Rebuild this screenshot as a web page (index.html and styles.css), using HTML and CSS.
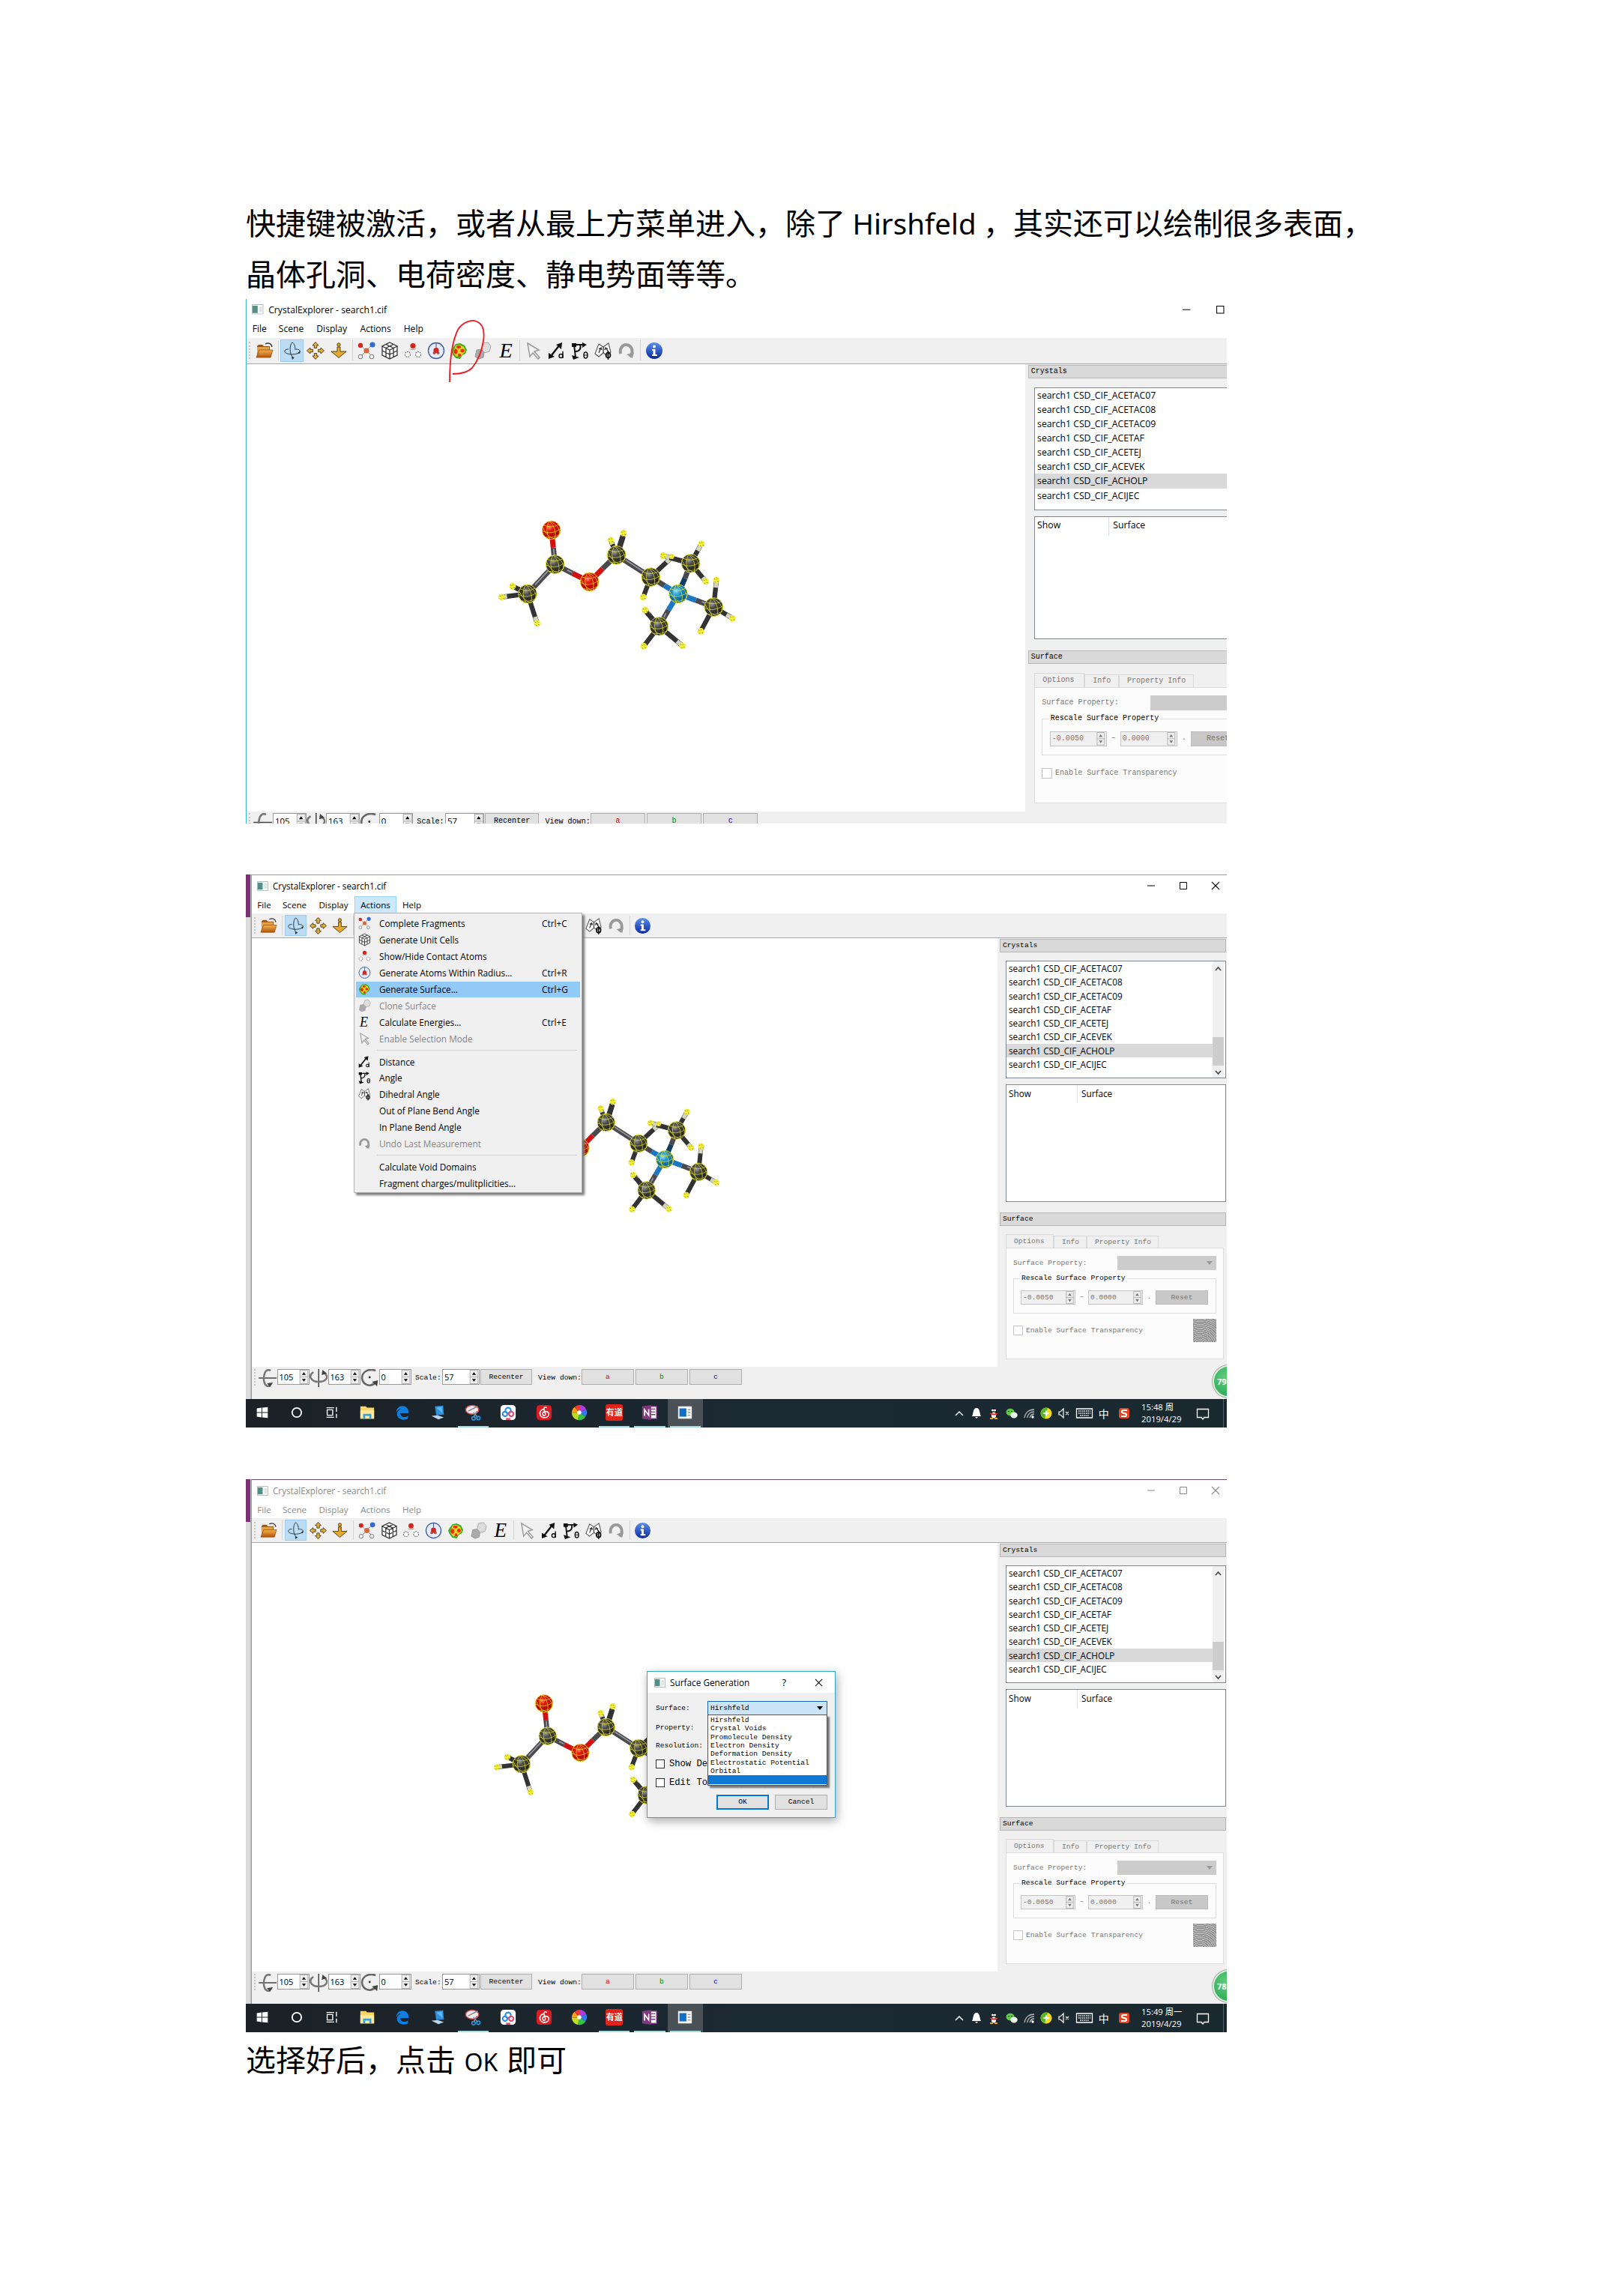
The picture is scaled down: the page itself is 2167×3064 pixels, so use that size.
FILE: index.html
```html
<!DOCTYPE html>
<html lang="zh-CN">
<head>
<meta charset="utf-8">
<title>CrystalExplorer</title>
<link rel="stylesheet" href="styles.css">
</head>
<body>
<svg class="defs" width="0" height="0">
<defs>
<radialGradient id="gC" cx=".4" cy=".35" r=".7"><stop offset="0" stop-color="#999"/><stop offset=".3" stop-color="#4a4a4a"/><stop offset="1" stop-color="#14140e"/></radialGradient>
<radialGradient id="gO" cx=".4" cy=".35" r=".7"><stop offset="0" stop-color="#ff8070"/><stop offset=".3" stop-color="#e01404"/><stop offset="1" stop-color="#900"/></radialGradient>
<radialGradient id="gN" cx=".4" cy=".35" r=".7"><stop offset="0" stop-color="#8fe0ff"/><stop offset=".35" stop-color="#1f8fc8"/><stop offset="1" stop-color="#064a78"/></radialGradient>
<linearGradient id="gF" x2="0" y2="1"><stop offset="0" stop-color="#f6b04a"/><stop offset="1" stop-color="#b3560c"/></linearGradient>
<linearGradient id="gI" x2="0" y2="1"><stop offset="0" stop-color="#5a8ff0"/><stop offset="1" stop-color="#0a2a9c"/></linearGradient>
<radialGradient id="gS"><stop offset="0" stop-color="#f01808"/><stop offset=".7" stop-color="#f03810"/><stop offset="1" stop-color="#f0a020"/></radialGradient>
<symbol id="mesh" viewBox="-40 -40 80 80" overflow="visible"><g fill="none" stroke="#f4f01c" stroke-width="2"><circle r="37" stroke-width="2.600"/><path d="M-37 2Q-5 22 37-4M-31-20Q0-6 30-22M-24 28Q8 34 32 18M-8-37Q-28 0-6 37M-8-37Q24-6 14 35M-8-37Q40-16 32 18M-35-12Q-16 30 14 35"/></g></symbol>
<symbol id="h" viewBox="-16 -16 32 32"><circle r="13" fill="#e9e43a"/><path d="M-13 0Q0 6 13-1M-5-12Q-3 0-6 12M5-12Q8 0 4 12" stroke="#ff3" stroke-width="3" fill="none"/><path d="M-8-5l4 2M4 4l5 3M2-7l3 3M-6 7l3 2" stroke="#86843c" stroke-width="3"/></symbol>
<symbol id="molecule" viewBox="0 0 1110 660">
<g stroke-width="21" stroke="#4a4a4e">
<path d="M302 252L295 185M302 252L192 370M302 252L372 288M548 215L492 270M548 215L685 303M845 248L822 308M937 423L866 396M718 500L756 435M685 303L740 337"/>
<path stroke="#d31010" d="M295 185L287 115M372 288L440 322M440 322L492 270"/>
<path stroke="#1d78c4" d="M740 337L795 370M795 370L866 396M795 370L756 435"/><path stroke="#123d63" d="M795 370L822 308"/>
<g stroke="#333" stroke-width="19"><path d="M192 370L88 383M192 370L132 340M192 370L230 488M548 215L525 155M548 215L576 127M685 303L768 225M685 303L655 383M845 248L735 217M845 248L888 170M845 248L905 320M937 423L948 315M937 423L1012 468M937 423L885 520M718 500L662 435M718 500L657 580M718 500L812 578"/></g>
<g stroke="#d6d3bd" stroke-width="17"><path d="M88 383l22-3M132 340l20 10M230 488l-8-26M525 155l6 17M768 225l-20 19M735 217l32 9M888 170l-15 27M905 320l-12-15M948 315l-3 30M1012 468l-24-14M662 435l16 18M812 578l-22-18"/></g>
<g stroke="#9a9aa2" stroke-width="5"><path d="M276 276L222 334M584 234L660 284M746 448L738 464M890 402L918 412M296 190l3 28M350 275l20 10"/></g>
</g>
<g fill="url(#gC)"><circle cx="302" cy="252" r="37"/><circle cx="192" cy="370" r="37"/><circle cx="548" cy="215" r="37"/><circle cx="685" cy="303" r="37"/><circle cx="845" cy="248" r="37"/><circle cx="937" cy="423" r="37"/><circle cx="718" cy="500" r="37"/></g>
<circle cx="287" cy="115" r="37" fill="url(#gO)"/><circle cx="440" cy="322" r="37" fill="url(#gO)"/><circle cx="795" cy="370" r="37" fill="url(#gN)"/>
<path d="M560 192L576 140M176 360L140 344M696 478L668 444M822 242L760 226" stroke="#333" stroke-width="18"/>
<g><use href="#mesh" x="262" y="212" width="80" height="80"/><use href="#mesh" x="152" y="330" width="80" height="80"/><use href="#mesh" x="508" y="175" width="80" height="80"/><use href="#mesh" x="645" y="263" width="80" height="80"/><use href="#mesh" x="805" y="208" width="80" height="80"/><use href="#mesh" x="897" y="383" width="80" height="80"/><use href="#mesh" x="678" y="460" width="80" height="80"/><use href="#mesh" x="247" y="75" width="80" height="80"/><use href="#mesh" x="400" y="282" width="80" height="80"/><use href="#mesh" x="755" y="330" width="80" height="80"/></g>
<g><use href="#h" x="72" y="367" width="32" height="32"/><use href="#h" x="116" y="324" width="32" height="32"/><use href="#h" x="214" y="472" width="32" height="32"/><use href="#h" x="509" y="139" width="32" height="32"/><use href="#h" x="560" y="111" width="32" height="32"/><use href="#h" x="719" y="201" width="32" height="32"/><use href="#h" x="756" y="207" width="26" height="26"/><use href="#h" x="872" y="154" width="32" height="32"/><use href="#h" x="889" y="304" width="32" height="32"/><use href="#h" x="639" y="367" width="32" height="32"/><use href="#h" x="932" y="299" width="32" height="32"/><use href="#h" x="996" y="452" width="32" height="32"/><use href="#h" x="869" y="504" width="32" height="32"/><use href="#h" x="646" y="419" width="32" height="32"/><use href="#h" x="641" y="564" width="32" height="32"/><use href="#h" x="796" y="562" width="32" height="32"/></g>
</symbol>
<symbol id="app" viewBox="0 0 16 14"><path d="M.5.5h15v13H.5z" fill="#fff" stroke="#a9b4b4"/><path d="M1 2h7v10H1z" fill="#4f9088"/><path d="M10 3h4v8h-4z" fill="#dde6e6"/></symbol>
<symbol id="open" viewBox="0 0 24 24"><path d="M2 6l2-2h5l2 2h8v5H2z" fill="#9a5412"/><path d="M2 7h16v14H2z" fill="#e3a242"/><path d="M1 21L5 11h18l-3 10z" fill="url(#gF)" stroke="#8a4408" stroke-width=".7"/><path d="M13 3c4-2 8-1 9 4" fill="none" stroke="#333" stroke-width="1.3"/></symbol>
<symbol id="rot" viewBox="0 0 24 24"><g fill="none" stroke="#26343e" stroke-width="1"><path d="M12 1c-4 3-4 16 1 20M12 1c3 1 4 6 4 10M2 12c-2 5 15 7 20 2M2 12c1-2 3-2 5-2M17 10c4 0 6 2 5 4"/></g><path d="M11 20l4 1-3 3zM19 15l4-3-1 4z" fill="#26343e"/></symbol>
<symbol id="move" viewBox="0 0 24 24"><g fill="#e2b04a" stroke="#5a4210" stroke-width="1"><path d="M12 .5l4 4.500h-2.300V8.500h-3.400V5H8zM12 23.500l4-4.500h-2.300v-3.500h-3.400V19H8zM.5 12L5 8v2.300h3.500v3.400H5V16zM23.500 12L19 8v2.300h-3.500v3.400H19V16z"/></g></symbol>
<symbol id="zoomi" viewBox="0 0 24 24"><g fill="#e2a831" stroke="#5a4210" stroke-width="1"><path d="M10 7h4v6h8l-10 8.500L2 13h8z"/><circle cx="12" cy="4" r="2.200"/></g></symbol>
<symbol id="frag" viewBox="0 0 24 24"><path d="M4 5l8 7 7-8M12 12l-8 8M12 12l8 8" fill="none" stroke="#999" stroke-width="1"/><circle cx="4" cy="5" r="3.200" fill="#d3261c"/><circle cx="20" cy="4" r="3.600" fill="#3569d0"/><circle cx="12" cy="12" r="3.600" fill="#d6653c"/><g fill="#f4f4f4" stroke="#777"><circle cx="4" cy="20" r="2.800"/><circle cx="19" cy="20" r="2.800"/></g></symbol>
<symbol id="cube" viewBox="0 0 24 24"><path d="M12 1l10 5v12l-10 5-10-5V6z" fill="#fff"/><g fill="none" stroke="#333" stroke-width="1.300"><path d="M12 1l10 5v12l-10 5-10-5V6zM2 6l10 5 10-5M12 11v12M7 3.500l10 5V20M17 3.500L7 8.500V20M2 12l10 5 10-5"/></g></symbol>
<symbol id="contact" viewBox="0 0 24 24"><circle cx="12" cy="5.500" r="3.600" fill="#d3261c"/><path d="M8 9c-1 2 8 2 8 0" stroke="#999" fill="none"/><g fill="#fff" stroke="#777" stroke-width="1.200" stroke-dasharray="2 1"><circle cx="5" cy="17" r="3.500"/><circle cx="19" cy="17" r="3.500"/></g></symbol>
<symbol id="radius" viewBox="0 0 24 24"><circle cx="12" cy="12" r="10.500" fill="#e4ecfa" stroke="#3a5a9a" stroke-width="1.300"/><path d="M12 1v7" stroke="#3a5a9a"/><circle cx="9.500" cy="15" r="2" fill="#a55"/><circle cx="14.500" cy="15" r="2" fill="#966"/><circle cx="12" cy="11.500" r="3.600" fill="#d3261c"/></symbol>
<symbol id="surf" viewBox="0 0 24 24"><path d="M7 3l6-1 6 3 3 6-2 5-4 2-3 5-6-1-4-5-2-5 3-5z" fill="#3fae20"/><path d="M7 5l5-1 6 3 2 6-5 5-7 2-4-5z" fill="#d8dc20"/><g fill="url(#gS)"><ellipse cx="11" cy="7" rx="3.500" ry="2.300"/><ellipse cx="7" cy="13" rx="3" ry="4"/><ellipse cx="16" cy="12" rx="3" ry="2.800"/><circle cx="12" cy="18" r="2.400"/></g></symbol>
<symbol id="clone" viewBox="0 0 24 24"><path d="M12 2l7-1 4 5-2 7-7 2-4-4z" fill="#ddd" stroke="#aaa"/><path d="M4 11l6-1 4 4-1 7-6 2-5-3z" fill="#aaa" stroke="#999"/></symbol>
<symbol id="sel" viewBox="0 0 24 24"><path d="M4 2l15 9-6 2 7 8-2 2-7-8-4 5z" fill="#f2f2f2" stroke="#999" stroke-width="1.500"/></symbol>
<symbol id="dist" viewBox="0 0 24 24"><path d="M5 18L16 4" stroke="#111" stroke-width="2.400"/><path d="M11 4l8-3-1 9zM1 15l8 5-8 3z" fill="#111"/><path d="M20 13v9" stroke="#111" stroke-width="1.500"/><circle cx="17.500" cy="19" r="2.500" fill="none" stroke="#111" stroke-width="1.500"/></symbol>
<symbol id="angle" viewBox="0 0 24 24"><path d="M3 4h14M4 4l2 17M12 4c2 5-1 9-6 9" fill="none" stroke="#111" stroke-width="2"/><path d="M15 1l6 3-6 4zM1 18l10 3-8 3zM1 2h6v5H1z" fill="#111"/><ellipse cx="19.500" cy="18" rx="2.500" ry="4" fill="none" stroke="#111" stroke-width="1.500"/><path d="M17 18h5" stroke="#111"/></symbol>
<symbol id="dihed" viewBox="0 0 24 24"><path d="M6 3l6 4 7-5 3 12-5 4-5-3-6 5-5-4z" fill="#fff" stroke="#555" stroke-width="1.100"/><path d="M12 7v8M9 8l-3 7M15 8l4 6M6 10l3-2 1 3M14 11l1-3 3 2" fill="none" stroke="#333" stroke-width="1.300"/><ellipse cx="18.500" cy="18" rx="3" ry="3.500" fill="none" stroke="#111" stroke-width="1.800"/><path d="M18.500 12v12" stroke="#111" stroke-width="1.500"/></symbol>
<symbol id="undo" viewBox="0 0 24 24"><path d="M4 16C1 0 23 0 19 17l-3 3" fill="none" stroke="#999" stroke-width="4"/><path d="M12 17l8 5 2-8z" fill="#999"/></symbol>
<symbol id="info" viewBox="0 0 24 24"><circle cx="12" cy="12" r="11" fill="url(#gI)"/><circle cx="12" cy="6.500" r="2" fill="#fff"/><path d="M9 10h4.500v7H16v2H9v-2h1.500v-5H9z" fill="#fff"/></symbol>
<symbol id="rx" viewBox="0 0 24 24"><g fill="none" stroke="#444"><path d="M0 12h24" stroke-width="1.500"/><path d="M16 2C8-2 6 10 7 16c1 6 5 8 8 6" stroke="#777" stroke-width="2.500"/></g><path d="M11 19l8-1-4 6z" fill="#444"/></symbol>
<symbol id="ry" viewBox="0 0 24 24"><g fill="none" stroke="#444"><path d="M12 0v24" stroke-width="1.500"/><path d="M5 4C-3 9 2 17 12 17s15-7 7-12" stroke="#777" stroke-width="2.500"/></g><path d="M16 8l1-7 6 5z" fill="#444"/></symbol>
<symbol id="rz" viewBox="0 0 24 24"><path d="M20 2C8-2 1 6 2 13c1 8 11 12 18 5" fill="none" stroke="#666" stroke-width="2.500"/><path d="M15 17l8-2-1 8z" fill="#444"/><circle cx="12" cy="11" r="1.400" fill="#333"/></symbol>
<symbol id="win" viewBox="0 0 24 24"><path d="M4 6l7-1v6.500H4zM12 5l8-1v7.500h-8zM4 12.500h7V19l-7-1zM12 12.500h8V20l-8-1z" fill="#fff"/></symbol>
<symbol id="cort" viewBox="0 0 24 24"><circle cx="12" cy="12" r="6.700" fill="none" stroke="#fff" stroke-width="2"/></symbol>
<symbol id="task" viewBox="0 0 24 24"><path d="M4 5h11M4 19h11M5 8h8v8H5zM18.500 4v7M18.500 14v6" fill="none" stroke="#fff" stroke-width="1.500"/></symbol>
<symbol id="folder" viewBox="0 0 24 24"><path d="M2 3h8l2 2h10v16H2z" fill="#fbd664"/><path d="M2 9h20v12H2z" fill="#ffe9a0"/><path d="M6 21v-7h12v7h-3v-4H9v4z" fill="#39a2dc"/></symbol>
<symbol id="edge" viewBox="0 0 24 24"><path d="M3 12C3-1 22-1 21 13H9c0 6 7 7 11 4v4C10 26 1 18 5 11c3-5 6-5 9-4 0 0 2 1 2 3H9c1-7-4-2-6 2z" fill="#0f7ee0"/></symbol>
<symbol id="pc" viewBox="0 0 24 24"><path d="M8 3l12-1 1 13-11 1z" fill="#2d91e0"/><path d="M3 17l9-1 9 3-8 3z" fill="#bcd5e4"/><path d="M10 5l8-1 1 9z" fill="#62b8f2"/></symbol>
<symbol id="snip" viewBox="0 0 24 24"><ellipse cx="11" cy="8" rx="9.500" ry="6.500" fill="#f2eaea" stroke="#c44" stroke-width="1.500"/><path d="M5 10l14-7M13 12l6 7M18 10l-5 9" stroke="#889" stroke-width="1.700"/><circle cx="20" cy="20" r="2.500" fill="none" stroke="#299be0" stroke-width="1.700"/><circle cx="13" cy="20.500" r="2.500" fill="none" stroke="#299be0" stroke-width="1.700"/></symbol>
<symbol id="baidu" viewBox="0 0 24 24"><rect x="1" y="1" width="22" height="22" rx="5" fill="#fff"/><g fill="none" stroke-width="2.300"><circle cx="12" cy="9" r="4" stroke="#2a90e8"/><circle cx="7.500" cy="14" r="3.400" stroke="#2a90e8"/><circle cx="16.500" cy="14" r="3.400" stroke="#e8486a"/></g><path d="M9 20h6v3H9z" fill="#e8486a"/></symbol>
<symbol id="netease" viewBox="0 0 24 24"><rect x="1" y="1" width="22" height="22" rx="5" fill="#dd1b22"/><path d="M16 5c-3-2-5 0-4 3l2 6c0 4-5 3-4-1 1-3 8-4 9 1 0 7-13 8-13-1 0-3 2-5 5-6" fill="none" stroke="#fff" stroke-width="1.700"/></symbol>
<symbol id="pin" viewBox="0 0 24 24"><g><path d="M12 12L12 1A11 11 0 0 1 22 7z" fill="#b13cd6"/><path d="M12 12L22 7A11 11 0 0 1 21 18z" fill="#3a78f0"/><path d="M12 12L21 18A11 11 0 0 1 10 23z" fill="#36c148"/><path d="M12 12L10 23A11 11 0 0 1 1 13z" fill="#bfe020"/><path d="M12 12L1 13A11 11 0 0 1 5 4z" fill="#f8a010"/><path d="M12 12L5 4A11 11 0 0 1 12 1z" fill="#f03a30"/></g><circle cx="12" cy="12" r="3" fill="#fff"/></symbol>
<symbol id="onenote" viewBox="0 0 24 24"><path d="M12 3h10v18H12z" fill="#fff" stroke="#7a3480" stroke-width="1.500"/><path d="M14 7h6M14 11h6M14 15h6" stroke="#7a3480" stroke-width="1.500"/><path d="M1 3l13-2v22L1 21z" fill="#80397b"/><path d="M4.500 17V8l6 8V7" fill="none" stroke="#fff" stroke-width="1.800"/></symbol>
<symbol id="ce" viewBox="0 0 24 24"><path d="M2 3h20v18H2z" fill="#f4f4f4"/><path d="M4 6h10v12H4z" fill="#0f6fc6"/><path d="M16 8h4M16 12h4M16 16h4" stroke="#999" stroke-width="1.500"/></symbol>
<symbol id="up" viewBox="0 0 16 16"><path d="M3 11l5-5 5 5" fill="none" stroke="#fff" stroke-width="1.500"/></symbol>
<symbol id="bell" viewBox="0 0 16 16"><path d="M8 1c5 0 4 8 6 11H2c2-3 1-11 6-11zM6 13h4l-2 2z" fill="#fff"/></symbol>
<symbol id="qq" viewBox="0 0 16 16"><ellipse cx="8" cy="8" rx="4.500" ry="7" fill="#111"/><ellipse cx="8" cy="10.500" rx="3.200" ry="4" fill="#fff"/><path d="M3 7q5 3 10 0v2q-5 3-10 0z" fill="#e22"/><path d="M3 14h4v2H3zM9 14h4v2H9z" fill="#f8a010"/><circle cx="6.500" cy="4" r="1.500" fill="#fff"/><circle cx="9.500" cy="4" r="1.500" fill="#fff"/></symbol>
<symbol id="wechat" viewBox="0 0 16 16"><ellipse cx="6" cy="6.500" rx="5.500" ry="4.800" fill="#5fce3c"/><ellipse cx="11" cy="10.500" rx="4.700" ry="4" fill="#eef5ea"/><circle cx="4" cy="5.500" r=".8"/><circle cx="8" cy="5.500" r=".8"/></symbol>
<symbol id="wifi" viewBox="0 0 16 16"><g fill="none" stroke="#bbb" stroke-width="1.300"><path d="M2 14C3 7 8 3 15 3M5.500 14c1-5 5-8 9.500-8M9 14c1-3 3-5 6-5"/></g><circle cx="13" cy="13" r="1.700" fill="#fff"/></symbol>
<symbol id="safe" viewBox="0 0 16 16"><circle cx="8" cy="8" r="7.500" fill="#f4dc18"/><path d="M8 .5a7.500 7.500 0 0 0-2 14.700L10 1z" fill="#54b828"/><path d="M8 4.500v7M4.500 8h7" stroke="#fff" stroke-width="2.200"/></symbol>
<symbol id="vol" viewBox="0 0 16 16"><path d="M2 6h2l4-4v12l-4-4H2zM11 6l4 4M15 6l-4 4" fill="none" stroke="#fff" stroke-width="1.200"/></symbol>
<symbol id="kbd" viewBox="0 0 24 16"><path d="M1.500 2h21v12h-21z" fill="none" stroke="#fff" stroke-width="1.300"/><path d="M4 5h16M4 8h16M6 11h12" stroke="#fff" stroke-width="1.500" stroke-dasharray="1.500 1"/></symbol>
<symbol id="sogou" viewBox="0 0 16 16"><rect x="1" y="1" width="14" height="14" rx="3" fill="#e8431c"/><path d="M12 4H6Q4 6 6 7.500l4 1Q12 10 10 12H4" fill="none" stroke="#fff" stroke-width="2.200"/></symbol>
<symbol id="note" viewBox="0 0 18 18"><path d="M1.500 2.500h15v11H11L9 16l-2-2.500H1.500z" fill="none" stroke="#fff" stroke-width="1.300"/></symbol>
<symbol id="min" viewBox="0 0 12 12"><path d="M1 6h10" stroke="currentColor"/></symbol>
<symbol id="max" viewBox="0 0 12 12"><path d="M1.500 1.500h9v9h-9z" fill="none" stroke="currentColor"/></symbol>
<symbol id="cls" viewBox="0 0 12 12"><path d="M1 1l10 10M11 1L1 11" stroke="currentColor" stroke-width="1.100"/></symbol>
<symbol id="spin" viewBox="0 0 11 18"><path d="M.5.500h10v17H.5zM0 9h11" fill="#eee" stroke="#b4b4b4"/><path d="M5.500 3l2.500 3.500H3zM5.500 15l2.500-3.500H3z" fill="currentColor"/></symbol>
</defs>
</svg>

<main class="page">
<p class="para">快捷键被激活，或者从最上方菜单进入，除了<span class="latin">Hirshfeld</span>，其实还可以绘制很多表面，<br>晶体孔洞、电荷密度、静电势面等等。</p>

<section class="shot shot-one">
<div class="window">
<header class="title"><svg class="appicon"><use href="#app"/></svg><span>CrystalExplorer - search1.cif</span><div class="winbtns"><svg><use href="#min"/></svg><svg><use href="#max"/></svg><svg><use href="#cls"/></svg></div></header>
<nav class="menu"><span class="m1">File</span><span class="m2">Scene</span><span class="m3">Display</span><span class="m3">Actions</span><span class="m4">Help</span></nav>
<div class="toolbar"><i class="grip"></i><b><svg><use href="#open"/></svg></b><i class="sep"></i><b class="on"><svg><use href="#rot"/></svg></b><b><svg><use href="#move"/></svg></b><b><svg><use href="#zoomi"/></svg></b><i class="sep"></i><b><svg><use href="#frag"/></svg></b><b><svg><use href="#cube"/></svg></b><b><svg><use href="#contact"/></svg></b><b><svg><use href="#radius"/></svg></b><b><svg><use href="#surf"/></svg></b><b><svg><use href="#clone"/></svg></b><b class="e">E</b><i class="sep"></i><b><svg><use href="#sel"/></svg></b><b><svg><use href="#dist"/></svg></b><b><svg><use href="#angle"/></svg></b><b><svg><use href="#dihed"/></svg></b><b><svg><use href="#undo"/></svg></b><i class="sep"></i><b><svg><use href="#info"/></svg></b></div>
<div class="work">
<div class="canvas"><svg class="mol"><use href="#molecule"/></svg></div>
<aside class="panel">
<h2>Crystals</h2>
<div class="list"><ul><li>search1 CSD_CIF_ACETAC07</li><li>search1 CSD_CIF_ACETAC08</li><li>search1 CSD_CIF_ACETAC09</li><li>search1 CSD_CIF_ACETAF</li><li>search1 CSD_CIF_ACETEJ</li><li>search1 CSD_CIF_ACEVEK</li><li class="cur">search1 CSD_CIF_ACHOLP</li><li>search1 CSD_CIF_ACIJEC</li></ul></div>
<div class="table"><span class="c1">Show</span><span class="c2">Surface</span></div>
<h2 class="second">Surface</h2>
<div class="tabs"><span class="t1">Options</span><span class="t2">Info</span><span class="t3">Property Info</span></div>
<div class="opts">
<div class="prop"><span>Surface Property:</span><i class="combo"></i></div>
<fieldset><legend>Rescale Surface Property</legend><div class="range"><span class="spin">-0.0050<svg><use href="#spin"/></svg></span><em>–</em><span class="spin">0.0000<svg><use href="#spin"/></svg></span><em>.</em><span class="reset">Reset</span></div></fieldset>
<div class="trans"><i class="check"></i><span>Enable Surface Transparency</span></div>
</div>
</aside>
</div>
<footer class="bottom"><i class="grip"></i><svg><use href="#rx"/></svg><span class="num">105<svg><use href="#spin"/></svg></span><svg><use href="#ry"/></svg><span class="num">163<svg><use href="#spin"/></svg></span><svg><use href="#rz"/></svg><span class="num">0<svg><use href="#spin"/></svg></span><span class="lab scale">Scale:</span><span class="num wide">57<svg><use href="#spin"/></svg></span><span class="btn">Recenter</span><span class="lab view">View down:</span><span class="btn ax red">a</span><span class="btn ax green">b</span><span class="btn ax blue">c</span></footer>
</div>
<svg class="scribble" viewBox="0 0 60 90"><path d="M4 84C4 55 7 30 15 14C21 4 33 0 40 3C48 6 51 15 49 29C47 42 42 55 34 65C29 70 19 73 8 73" fill="none" stroke="#f01820" stroke-width="1.800"/></svg>
</section>

<section class="shot shot-full">
<div class="desktop">
<div class="edge"></div>
<div class="window">
<header class="title"><svg class="appicon"><use href="#app"/></svg><span>CrystalExplorer - search1.cif</span><div class="winbtns"><svg><use href="#min"/></svg><svg><use href="#max"/></svg><svg><use href="#cls"/></svg></div></header>
<nav class="menu"><span class="m1">File</span><span class="m2">Scene</span><span class="m3">Display</span><span class="m3 open">Actions</span><span class="m4">Help</span></nav>
<div class="toolbar"><i class="grip"></i><b><svg><use href="#open"/></svg></b><i class="sep"></i><b class="on"><svg><use href="#rot"/></svg></b><b><svg><use href="#move"/></svg></b><b><svg><use href="#zoomi"/></svg></b><i class="sep"></i><b><svg><use href="#frag"/></svg></b><b><svg><use href="#cube"/></svg></b><b><svg><use href="#contact"/></svg></b><b><svg><use href="#radius"/></svg></b><b><svg><use href="#surf"/></svg></b><b><svg><use href="#clone"/></svg></b><b></b><i class="sep"></i><b><svg><use href="#sel"/></svg></b><b><svg><use href="#dist"/></svg></b><b><svg><use href="#angle"/></svg></b><b><svg><use href="#dihed"/></svg></b><b><svg><use href="#undo"/></svg></b><i class="sep"></i><b><svg><use href="#info"/></svg></b></div>
<div class="work">
<div class="canvas"><svg class="mol"><use href="#molecule"/></svg></div>
<aside class="panel">
<h2>Crystals</h2>
<div class="list"><ul><li>search1 CSD_CIF_ACETAC07</li><li>search1 CSD_CIF_ACETAC08</li><li>search1 CSD_CIF_ACETAC09</li><li>search1 CSD_CIF_ACETAF</li><li>search1 CSD_CIF_ACETEJ</li><li>search1 CSD_CIF_ACEVEK</li><li class="cur">search1 CSD_CIF_ACHOLP</li><li>search1 CSD_CIF_ACIJEC</li></ul><svg class="scroll" viewBox="0 0 15 155"><path d="M0 0h15v155H0z" fill="#f0f0f0"/><path d="M0 101h15v38H0z" fill="#cdcdcd"/><path d="M4 12l3.500-4 3.500 4M4 146l3.500 4 3.500-4" fill="none" stroke="#444" stroke-width="1.600"/></svg></div>
<div class="table"><span class="c1">Show</span><span class="c2">Surface</span></div>
<h2 class="second">Surface</h2>
<div class="tabs"><span class="t1">Options</span><span class="t2">Info</span><span class="t3">Property Info</span></div>
<div class="opts">
<div class="prop"><span>Surface Property:</span><i class="combo"></i></div>
<fieldset><legend>Rescale Surface Property</legend><div class="range"><span class="spin">-0.0050<svg><use href="#spin"/></svg></span><em>–</em><span class="spin">0.0000<svg><use href="#spin"/></svg></span><em>.</em><span class="reset">Reset</span></div></fieldset>
<div class="trans"><i class="check"></i><span>Enable Surface Transparency</span><i class="swatch"></i></div>
</div>
</aside>
</div>
<footer class="bottom"><i class="grip"></i><svg><use href="#rx"/></svg><span class="num">105<svg><use href="#spin"/></svg></span><svg><use href="#ry"/></svg><span class="num">163<svg><use href="#spin"/></svg></span><svg><use href="#rz"/></svg><span class="num">0<svg><use href="#spin"/></svg></span><span class="lab scale">Scale:</span><span class="num wide">57<svg><use href="#spin"/></svg></span><span class="btn">Recenter</span><span class="lab view">View down:</span><span class="btn ax red">a</span><span class="btn ax green">b</span><span class="btn ax blue">c</span></footer>
</div>
</div>
<div class="ball">79</div>
<div class="taskbar"><b><svg><use href="#win"/></svg></b><b><svg><use href="#cort"/></svg></b><b><svg><use href="#task"/></svg></b><b><svg><use href="#folder"/></svg></b><b><svg><use href="#edge"/></svg></b><b><svg><use href="#pc"/></svg></b><b class="run"><svg><use href="#snip"/></svg></b><b><svg><use href="#baidu"/></svg></b><b><svg><use href="#netease"/></svg></b><b><svg><use href="#pin"/></svg></b><b class="run"><span class="youdao">有道</span></b><b class="run"><svg><use href="#onenote"/></svg></b><b class="run act"><svg><use href="#ce"/></svg></b>
<div class="tray"><svg><use href="#up"/></svg><svg><use href="#bell"/></svg><svg><use href="#qq"/></svg><svg><use href="#wechat"/></svg><svg><use href="#wifi"/></svg><svg><use href="#safe"/></svg><svg><use href="#vol"/></svg><svg class="kbd"><use href="#kbd"/></svg><span class="zh">中</span><svg><use href="#sogou"/></svg><div class="clock"><span>15:48 周</span><span>2019/4/29</span></div><svg class="note"><use href="#note"/></svg><i class="peek"></i></div></div>
<div class="dropdown">
<div class="item"><svg><use href="#frag"/></svg><span>Complete Fragments</span><kbd>Ctrl+C</kbd></div>
<div class="item"><svg><use href="#cube"/></svg><span>Generate Unit Cells</span></div>
<div class="item"><svg><use href="#contact"/></svg><span>Show/Hide Contact Atoms</span></div>
<div class="item"><svg><use href="#radius"/></svg><span>Generate Atoms Within Radius...</span><kbd>Ctrl+R</kbd></div>
<div class="item hot"><svg><use href="#surf"/></svg><span>Generate Surface...</span><kbd>Ctrl+G</kbd></div>
<div class="item off"><svg><use href="#clone"/></svg><span>Clone Surface</span></div>
<div class="item"><b class="e">E</b><span>Calculate Energies...</span><kbd>Ctrl+E</kbd></div>
<div class="item off"><svg><use href="#sel"/></svg><span>Enable Selection Mode</span></div>
<hr>
<div class="item"><svg><use href="#dist"/></svg><span>Distance</span></div>
<div class="item"><svg><use href="#angle"/></svg><span>Angle</span></div>
<div class="item"><svg><use href="#dihed"/></svg><span>Dihedral Angle</span></div>
<div class="item"><svg></svg><span>Out of Plane Bend Angle</span></div>
<div class="item"><svg></svg><span>In Plane Bend Angle</span></div>
<div class="item off"><svg><use href="#undo"/></svg><span>Undo Last Measurement</span></div>
<hr>
<div class="item"><svg></svg><span>Calculate Void Domains</span></div>
<div class="item"><svg></svg><span>Fragment charges/mulitplicities...</span></div>
</div>
</section>

<section class="shot shot-full inactive">
<div class="desktop">
<div class="edge"></div>
<div class="window">
<header class="title"><svg class="appicon"><use href="#app"/></svg><span>CrystalExplorer - search1.cif</span><div class="winbtns"><svg><use href="#min"/></svg><svg><use href="#max"/></svg><svg><use href="#cls"/></svg></div></header>
<nav class="menu"><span class="m1">File</span><span class="m2">Scene</span><span class="m3">Display</span><span class="m3">Actions</span><span class="m4">Help</span></nav>
<div class="toolbar"><i class="grip"></i><b><svg><use href="#open"/></svg></b><i class="sep"></i><b class="on"><svg><use href="#rot"/></svg></b><b><svg><use href="#move"/></svg></b><b><svg><use href="#zoomi"/></svg></b><i class="sep"></i><b><svg><use href="#frag"/></svg></b><b><svg><use href="#cube"/></svg></b><b><svg><use href="#contact"/></svg></b><b><svg><use href="#radius"/></svg></b><b><svg><use href="#surf"/></svg></b><b><svg><use href="#clone"/></svg></b><b class="e">E</b><i class="sep"></i><b><svg><use href="#sel"/></svg></b><b><svg><use href="#dist"/></svg></b><b><svg><use href="#angle"/></svg></b><b><svg><use href="#dihed"/></svg></b><b><svg><use href="#undo"/></svg></b><i class="sep"></i><b><svg><use href="#info"/></svg></b></div>
<div class="work">
<div class="canvas"><svg class="mol"><use href="#molecule"/></svg></div>
<aside class="panel">
<h2>Crystals</h2>
<div class="list"><ul><li>search1 CSD_CIF_ACETAC07</li><li>search1 CSD_CIF_ACETAC08</li><li>search1 CSD_CIF_ACETAC09</li><li>search1 CSD_CIF_ACETAF</li><li>search1 CSD_CIF_ACETEJ</li><li>search1 CSD_CIF_ACEVEK</li><li class="cur">search1 CSD_CIF_ACHOLP</li><li>search1 CSD_CIF_ACIJEC</li></ul><svg class="scroll" viewBox="0 0 15 155"><path d="M0 0h15v155H0z" fill="#f0f0f0"/><path d="M0 101h15v38H0z" fill="#cdcdcd"/><path d="M4 12l3.500-4 3.500 4M4 146l3.500 4 3.500-4" fill="none" stroke="#444" stroke-width="1.600"/></svg></div>
<div class="table"><span class="c1">Show</span><span class="c2">Surface</span></div>
<h2 class="second">Surface</h2>
<div class="tabs"><span class="t1">Options</span><span class="t2">Info</span><span class="t3">Property Info</span></div>
<div class="opts">
<div class="prop"><span>Surface Property:</span><i class="combo"></i></div>
<fieldset><legend>Rescale Surface Property</legend><div class="range"><span class="spin">-0.0050<svg><use href="#spin"/></svg></span><em>–</em><span class="spin">0.0000<svg><use href="#spin"/></svg></span><em>.</em><span class="reset">Reset</span></div></fieldset>
<div class="trans"><i class="check"></i><span>Enable Surface Transparency</span><i class="swatch"></i></div>
</div>
</aside>
</div>
<footer class="bottom"><i class="grip"></i><svg><use href="#rx"/></svg><span class="num">105<svg><use href="#spin"/></svg></span><svg><use href="#ry"/></svg><span class="num">163<svg><use href="#spin"/></svg></span><svg><use href="#rz"/></svg><span class="num">0<svg><use href="#spin"/></svg></span><span class="lab scale">Scale:</span><span class="num wide">57<svg><use href="#spin"/></svg></span><span class="btn">Recenter</span><span class="lab view">View down:</span><span class="btn ax red">a</span><span class="btn ax green">b</span><span class="btn ax blue">c</span></footer>
</div>
</div>
<div class="ball">78</div>
<div class="taskbar"><b><svg><use href="#win"/></svg></b><b><svg><use href="#cort"/></svg></b><b><svg><use href="#task"/></svg></b><b><svg><use href="#folder"/></svg></b><b><svg><use href="#edge"/></svg></b><b><svg><use href="#pc"/></svg></b><b class="run"><svg><use href="#snip"/></svg></b><b><svg><use href="#baidu"/></svg></b><b><svg><use href="#netease"/></svg></b><b><svg><use href="#pin"/></svg></b><b class="run"><span class="youdao">有道</span></b><b class="run"><svg><use href="#onenote"/></svg></b><b class="run act"><svg><use href="#ce"/></svg></b>
<div class="tray"><svg><use href="#up"/></svg><svg><use href="#bell"/></svg><svg><use href="#qq"/></svg><svg><use href="#wechat"/></svg><svg><use href="#wifi"/></svg><svg><use href="#safe"/></svg><svg><use href="#vol"/></svg><svg class="kbd"><use href="#kbd"/></svg><span class="zh">中</span><svg><use href="#sogou"/></svg><div class="clock"><span>15:49 周一</span><span>2019/4/29</span></div><svg class="note"><use href="#note"/></svg><i class="peek"></i></div></div>
<div class="dialog">
<header><svg class="appicon"><use href="#app"/></svg><span>Surface Generation</span><span class="help">?</span><svg class="x"><use href="#cls"/></svg></header>
<div class="form">
<div class="field f1"><label>Surface:</label><div class="select">Hirshfeld<svg viewBox="0 0 8 5"><path d="M0 0h8L4 5z"/></svg></div></div>
<div class="field f2">Property:</div>
<div class="field f2">Resolution:</div>
<div class="field big"><i></i>Show De</div>
<div class="field big"><i></i>Edit Tonto Input (Advanced)</div>
<div class="actions"><span class="ok">OK</span><span>Cancel</span></div>
</div>
<ul class="options"><li>Hirshfeld</li><li>Crystal Voids</li><li>Promolecule Density</li><li>Electron Density</li><li>Deformation Density</li><li>Electrostatic Potential</li><li>Orbital</li><li class="pick"></li></ul>
</div>
</section>
<p class="para last">选择好后，点击<span class="ok-word">OK</span>即可</p>
</main>
</body>
</html>
```
FILE: styles.css
```css
* { box-sizing: border-box; }
body { margin: 0; background: #fff; color: #000; font-family: "Open Sans", "Noto Sans CJK SC", sans-serif; }
i, em { font-style: normal; }
.defs { position: absolute; }
.page { padding: 262px 0 0 328px; }

.para { margin: 0; font: 400 40px/68px "Noto Sans CJK SC", sans-serif; white-space: nowrap; height: 140px; }
.latin { display: inline-block; width: 184px; text-align: center; font-family: "Noto Sans", sans-serif; font-size: 38.500px; line-height: 50px; }
.ok-word { display: inline-block; width: 68px; text-align: center; font-family: "Noto Sans", sans-serif; font-size: 32px; line-height: 50px; }
.last { margin-top: 1px; height: 68px; }

.shot { position: relative; width: 1309px; overflow: hidden; }
.shot-one { height: 700px; margin-top: -3px; }
.shot-one .window { zoom: 1.0436; width: 1303px; border-left: 1px solid #35b5d0; }
.shot-full { height: 738px; margin-top: 68px; }
.shot-full.inactive { margin-top: 69px; }
.desktop { display: flex; height: 700px; }
.edge { width: 7px; background: linear-gradient(#7a3274 57px, #dcdcdc 57px); border-right: 1px solid #bbb; flex: none; }
.shot-full .window { width: 1302px; border-left: 1px solid #4fb3cf; border-top: 1px solid #4fb3cf; }
.inactive .window { border-left-color: #999; border-top-color: #6d4a68; }
.window { background: #fff; display: flex; flex-direction: column; height: 700px; }

.title { height: 28px; flex: none; display: flex; align-items: center; padding-left: 7px; font-size: 11.700px; }
.shot-one .title { height: 27px; }
.appicon { width: 15px; height: 13px; margin-right: 6px; }
.winbtns { margin-left: auto; display: flex; gap: 31px; padding-right: 9px; }
.shot-one .winbtns { padding-right: 8px; }
.winbtns svg { width: 12px; height: 12px; }
.menu { height: 23px; flex: none; display: flex; font-size: 11.600px; line-height: 23px; text-align: center; }
.menu .m1 { width: 33px; } .menu .m2 { width: 48px; } .menu .m3 { width: 56px; } .menu .m4 { width: 41px; }
.menu .open { background: #cce8ff; border: 1px solid #99d1ff; line-height: 21px; }
.inactive .title, .inactive .menu { color: #8a8a8a; }

.toolbar { height: 33px; flex: none; background: #f0f0f0; border-bottom: 1px solid #a8a8a8; display: flex; align-items: center; }
.grip { width: 0; height: 22px; margin: 0 3px 0 3px; border-left: 2px dotted #c4c4c4; }
.toolbar b { width: 29.700px; height: 28px; display: flex; align-items: center; justify-content: center; font-weight: 400; }
.toolbar svg { width: 23px; height: 23px; }
.toolbar .on { background: #bcdcf4; border: 1px solid #9ccbee; }
.toolbar .sep { width: 1px; height: 26px; background: #d4d4d4; margin: 0 2.500px; }
.e { font: italic 27px "Liberation Serif", serif; }

.work { display: flex; height: 572px; flex: none; }
.canvas { position: relative; flex: 1; overflow: hidden; }
.mol { position: absolute; left: 298.500px; top: 177px; width: 352px; height: 211px; }
.shot-one .mol { left: 298px; width: 354.500px; height: 211px; top: 176px; }

.panel { width: 306px; background: #f0f0f0; padding: 1px 1px 0 3px; font: 9.630px "Liberation Mono", monospace; color: #777; }
.panel h2 { margin: 0; height: 18px; border: 1px solid #b8b8b8; background: #d9d9d9; color: #000; font: inherit; line-height: 16px; padding-left: 3px; }
.panel h2.second { margin-top: 14px; }
.list, .table { margin-left: 8px; width: 294px; height: 157px; background: #fff; border: 1px solid #828790; color: #000; font: 11.750px "Open Sans", sans-serif; display: flex; }
.list { margin-top: 11px; justify-content: space-between; }
.list ul { margin: 0; padding: 0; list-style: none; width: 275px; }
.list li { height: 18.300px; line-height: 18.300px; padding-left: 3px; }
.list .cur { background: #d9d9d9; }
.scroll { width: 15px; height: 155px; margin-right: 2px; }
.table { margin-top: 8px; line-height: 22px; }
.table .c1 { width: 95px; padding-left: 3px; height: 24px; border-right: 1px solid #ddd; }
.table .c2 { padding-left: 5px; }
.tabs { display: flex; margin: 11px 0 0 8px; height: 18px; align-items: flex-end; line-height: 16px; }
.tabs span { border: 1px solid #d9d9d9; border-bottom: 0; height: 16px; padding-left: 10px; }
.tabs .t1 { width: 64px; height: 18px; line-height: 18px; } .tabs .t2 { width: 44px; } .tabs .t3 { width: 96px; }
.opts { margin-left: 8px; width: 291px; height: 149px; border: 1px solid #dcdcdc; background: #fcfcfc; padding: 10px 9px 0 9px; }
.prop { display: flex; justify-content: space-between; height: 19px; line-height: 19px; }
.combo { width: 132px; background: #ccc; }
.combo::after { content: ""; display: block; margin: 7px 5px 0 auto; width: 0; border: 4px solid transparent; border-top: 5px solid #999; border-bottom: 0; }
.opts fieldset { margin: 4px 0 0; padding: 9px 9px 0; height: 54px; border: 1px solid #dcdcdc; }
.opts legend { padding: 0 2px; margin-left: -1px; color: #000; line-height: 14px; height: 14px; }
.range { display: flex; height: 19px; line-height: 18px; }
.range em { width: 17px; text-align: center; }
.spin { width: 73px; border: 1px solid #c4c4c4; background: #f0f0f0; display: flex; justify-content: space-between; padding-left: 2px; }
.spin svg { width: 13px; height: 17px; }
.reset { width: 70px; background: #c8c8c8; border: 1px solid #bcbcbc; text-align: center; }
.trans { display: flex; align-items: center; margin-top: 7px; height: 31px; }
.check { width: 13px; height: 13px; border: 1px solid #c4c4c4; background: #fff; margin-right: 4px; }
.swatch { margin-left: auto; width: 31px; height: 31px; background: repeating-radial-gradient(circle at 30% 120%, #888 0 1px, #b5b5b5 1px 2.500px); }

.bottom { height: 43px; flex: none; background: #f0f0f0; display: flex; align-items: flex-start; padding-top: 3px; font: 9.630px/20px "Liberation Mono", monospace; }
.shot-one .bottom { padding-top: 2px; }
.bottom .grip { margin: 0 4px 0 3px; }
.bottom > svg { width: 24.500px; height: 24px; flex: none; }
.num { width: 43.500px; height: 21px; border: 1px solid #999; background: #fff; display: flex; justify-content: space-between; align-items: center; padding-left: 2px; font: 11px "Open Sans", sans-serif; }
.num svg { width: 13px; height: 19px; }
.num.wide { width: 50px; margin-right: 1px; }
.lab { line-height: 23px; white-space: nowrap; }
.lab.scale { margin-left: 5px; width: 36px; }
.lab.view { margin-left: 8px; width: 58px; }
.btn { width: 69px; height: 21px; background: #e1e1e1; border: 1px solid #adadad; text-align: center; }
.ax { margin-right: 2px; width: 70px; }
.red { color: #e00; } .green { color: #080; } .blue { color: #00c; }

.taskbar { height: 38px; background: linear-gradient(90deg, #1b2126, #1b2933 50%, #1a2830); display: flex; position: relative; padding-left: 0; }
.taskbar > b { width: 47.150px; display: flex; align-items: center; justify-content: center; border-bottom: 2px solid transparent; font-weight: 400; }
.taskbar > b svg { width: 22px; height: 22px; }
.taskbar > b:first-child { width: 44px; }
.taskbar > .run { border-image: linear-gradient(90deg, transparent 8%, #9fdedc 8% 92%, transparent 92%) 1; border-width: 0 0 2px; border-style: solid; }
.taskbar > .act { background: #4a5257; }
.youdao { width: 23px; height: 22px; background: #e2231a; color: #fff; border-radius: 3px; font: bold 11px/21px "Noto Sans CJK SC", sans-serif; text-align: center; }
.tray { margin-left: auto; display: flex; align-items: center; color: #fff; }
.tray svg { width: 16px; height: 16px; margin-right: 7.300px; }
.tray .kbd { width: 24px; margin: 0 7px 0 0; }
.tray .zh { font: 14px "Noto Sans CJK SC", sans-serif; margin-right: 12px; }
.clock { width: 66px; font-size: 11.300px; line-height: 16px; display: flex; flex-direction: column; align-items: flex-start; white-space: nowrap; padding-left: 8px; }
.tray .note { width: 18px; height: 18px; margin: 2px 0 0 15px; }
.peek { width: 1px; height: 38px; background: #566; margin: 0 4px 0 18px; }
.ball { position: absolute; left: 1290px; top: 655px; width: 42px; height: 43px; border-radius: 50%; background: radial-gradient(circle at 40% 35%, #5fcb7c, #21a24c); border: 2px solid #d4f0d8; outline: 1px solid #aaa; color: #fff; font: bold 11px/39px "Open Sans", sans-serif; padding-left: 4px; }

.scribble { position: absolute; left: 268px; top: 27px; width: 60px; height: 90px; }

.dropdown { position: absolute; left: 144px; top: 51px; width: 305px; height: 374px; background: #f0f0f0; border: 1px solid #b0b0b0; box-shadow: 3px 3px 3px #777; padding: 3px 2px; font-size: 11.800px; }
.item { height: 21.900px; display: flex; align-items: center; padding-left: 3px; line-height: 16px; padding-bottom: 1px; }
.item svg, .item .e { width: 17px; height: 18px; margin-right: 11px; flex: none; }
.item .e { font-size: 18px; line-height: 18px; padding-left: 2px; }
.item kbd { font: inherit; margin-left: auto; width: 51px; }
.item.hot { background: #91c9f7; }
.item.off { color: #858585; }
.dropdown hr { border: 0; height: 1px; background: #d0d0d0; margin: 4px 4px 4px 28px; }

.dialog { position: absolute; left: 535px; top: 256px; width: 252px; height: 196px; border: 1px solid #35a8c8; background: #f0f0f0; box-shadow: 2px 4px 12px rgba(0,0,0,.35); font: 9.560px "Liberation Mono", monospace; }
.dialog header { height: 28px; background: #fff; display: flex; align-items: center; padding: 0 16px 0 9px; font: 11.800px "Open Sans", sans-serif; }
.dialog .help { margin-left: auto; margin-right: 38px; font-size: 13px; }
.dialog .x { width: 11px; height: 11px; }
.form { padding: 11px 10px 0 11px; }
.field { display: flex; align-items: center; height: 24.500px; white-space: nowrap; }
.field.f1 { height: 19px; margin-bottom: 4px; }
.field label { width: 69px; }
.select { width: 160px; height: 19px; border: 1px solid #1668a8; background: #cce4f7; display: flex; align-items: center; justify-content: space-between; padding: 0 5px 0 3px; }
.select svg { width: 8px; height: 5px; }
.field.big { font-size: 12.150px; }
.field i { width: 12px; height: 12px; border: 1px solid #333; background: #fff; margin-right: 6px; flex: none; }
.actions { display: flex; justify-content: flex-end; gap: 8px; margin-top: 4px; }
.actions span { width: 70px; height: 20px; background: #e1e1e1; border: 1px solid #adadad; text-align: center; line-height: 18px; }
.actions .ok { border: 2px solid #0078d7; line-height: 16px; }
.options { position: absolute; left: 80px; top: 57px; width: 160px; margin: 0; padding: 1px 0; list-style: none; background: #fff; border: 1px solid #555; box-shadow: 3px 3px 2px #777; }
.options li { height: 11.350px; line-height: 11.350px; padding-left: 3px; }
.options .pick { background: #0f78d4; }
```
